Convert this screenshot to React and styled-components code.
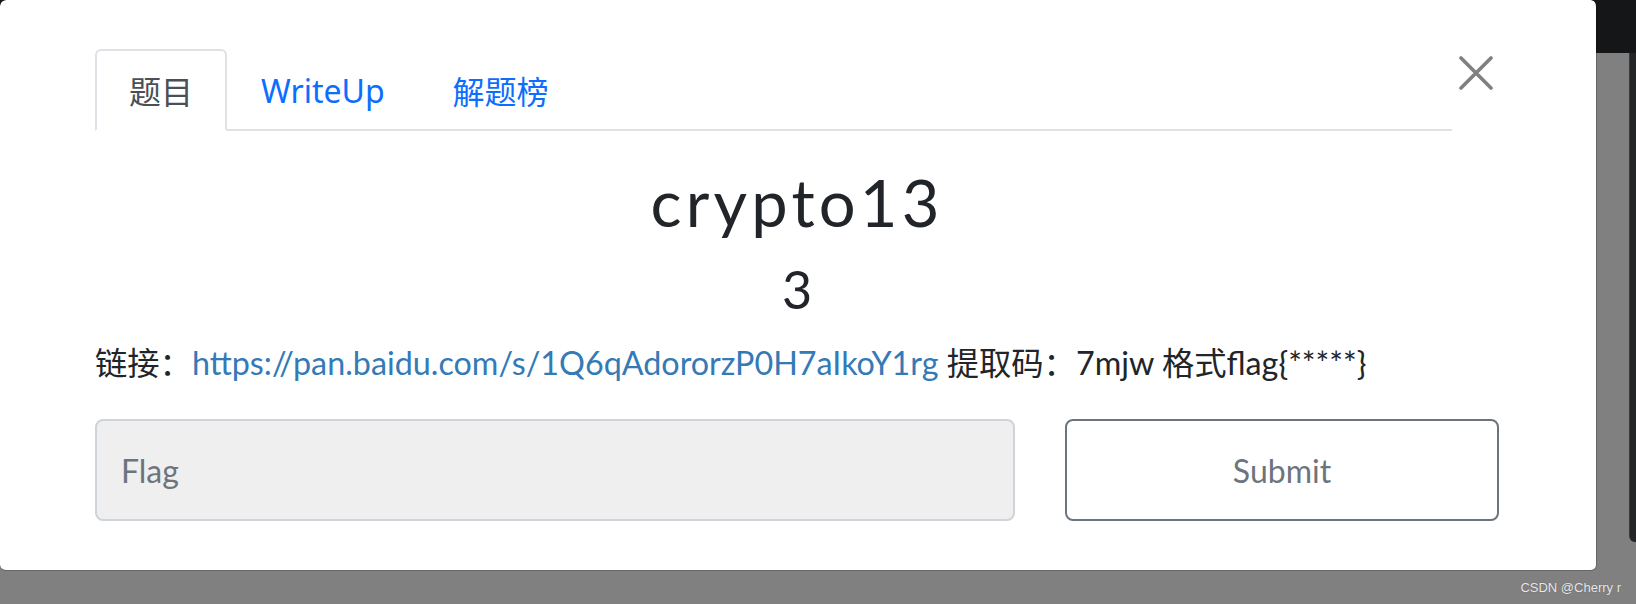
import React from "react";
import styled, { createGlobalStyle } from "styled-components";

const GlobalStyle = createGlobalStyle`
  html, body {
    margin: 0;
    padding: 0;
    overflow: hidden;
  }
  body {
    font-family: Lato, "Noto Sans CJK SC", sans-serif;
  }
`;

const Stage = styled.div`
  width: 1636px;
  height: 604px;
  display: flex;
  align-items: flex-start;
  background: linear-gradient(#151617 0 53px, #808080 53px);
  position: relative;
`;

const Modal = styled.div`
  box-sizing: border-box;
  width: 1597px;
  height: 571px;
  flex-shrink: 0;
  background: #fff;
  background-clip: padding-box;
  border-right: 1px solid rgba(0, 0, 0, 0.2);
  border-bottom: 1px solid rgba(0, 0, 0, 0.2);
  border-radius: 6px;
  padding: 49px 97px 0 95px;
  display: flex;
  flex-direction: column;
`;

const Side = styled.div`
  flex: 1;
  display: flex;
  justify-content: flex-end;
  padding-top: 53px;
`;

const ScrollStrip = styled.div`
  width: 6px;
  height: 489px;
  background: #232527;
  border-left: 1px solid #3a3b3c;
  border-bottom-left-radius: 6px;
`;

const Header = styled.div`
  display: flex;
  align-items: flex-start;
`;

const Tabs = styled.nav`
  flex: 1;
  display: flex;
  border-bottom: 2px solid #dee2e6;
`;

const Tab = styled.a`
  box-sizing: border-box;
  height: 82px;
  margin-bottom: -2px;
  padding: 0 32px;
  display: flex;
  align-items: center;
  font-family: "Noto Sans", "Noto Sans CJK SC", sans-serif;
  font-size: 32px;
  color: ${(p) => (p.active ? "#495057" : "#0d6efd")};
  background: ${(p) => (p.active ? "#fff" : "transparent")};
  border: 2px solid ${(p) => (p.active ? "#dee2e6" : "transparent")};
  border-bottom-color: ${(p) => (p.active ? "#fff" : "transparent")};
  border-radius: 6px 6px 0 0;
  text-decoration: none;
  cursor: pointer;
`;

const CloseButton = styled.button`
  width: 47px;
  height: 47px;
  padding: 0;
  border: none;
  background: transparent;
  display: flex;
  align-items: center;
  justify-content: center;
  cursor: pointer;
`;

const Title = styled.h1`
  margin: 32px 0 0;
  text-align: center;
  font-family: Lato, sans-serif;
  font-weight: 400;
  font-size: 65px;
  line-height: 78px;
  letter-spacing: 4.2px;
  color: #212529;
`;

const Score = styled.div`
  margin-top: 17px;
  text-align: center;
  font-family: Lato, sans-serif;
  font-size: 52px;
  line-height: 62px;
  color: #212529;
`;

const Desc = styled.p`
  margin: 24px 0 0;
  font-family: Lato, "Noto Sans CJK SC", sans-serif;
  font-size: 32.3px;
  line-height: 37px;
  color: #212529;
  white-space: nowrap;

  a {
    color: #337ab7;
    text-decoration: none;
  }
`;

const FormRow = styled.form`
  margin-top: 38px;
  display: flex;
  gap: 50px;
`;

const FlagInput = styled.input`
  box-sizing: border-box;
  flex: 1;
  height: 102px;
  padding: 0 24px;
  font-family: Lato, sans-serif;
  font-size: 32px;
  color: #495057;
  background: #efefef;
  border: 2px solid #ced4da;
  border-radius: 8px;
  outline: none;

  &::placeholder {
    color: #6c757d;
  }
`;

const SubmitButton = styled.button`
  box-sizing: border-box;
  width: 434px;
  height: 102px;
  font-family: Lato, sans-serif;
  font-size: 32px;
  color: #6c757d;
  background: #fff;
  border: 2px solid #6c757d;
  border-radius: 8px;
  cursor: pointer;
`;

const Watermark = styled.span`
  position: absolute;
  right: 15px;
  bottom: 9px;
  font-family: "Liberation Sans", Arial, sans-serif;
  font-size: 13px;
  color: #e8e8e8;
  text-shadow: 0 0 1px #555;
`;

const CloseIcon = () => (
  <svg width="34" height="34" viewBox="0 0 34 34">
    <path
      d="M2 2 L32 32 M32 2 L2 32"
      stroke="#808080"
      strokeWidth="3.6"
      strokeLinecap="round"
      fill="none"
    />
  </svg>
);

export default function App() {
  const tabs = ["题目", "WriteUp", "解题榜"];
  return (
    <>
      <GlobalStyle />
      <Stage>
        <Modal>
          <Header>
            <Tabs>
              {tabs.map((t, i) => (
                <Tab key={t} active={i === 0 ? 1 : 0}>
                  {t}
                </Tab>
              ))}
            </Tabs>
            <CloseButton aria-label="Close">
              <CloseIcon />
            </CloseButton>
          </Header>
          <Title>crypto13</Title>
          <Score>3</Score>
          <Desc>
            链接：<a href="#">https://pan.baidu.com/s/1Q6qAdororzP0H7aIkoY1rg</a> 提取码：7mjw 格式flag{"{*****}"}
          </Desc>
          <FormRow onSubmit={(e) => e.preventDefault()}>
            <FlagInput type="text" placeholder="Flag" />
            <SubmitButton type="submit">Submit</SubmitButton>
          </FormRow>
        </Modal>
        <Side>
          <ScrollStrip />
        </Side>
        <Watermark>CSDN @Cherry r</Watermark>
      </Stage>
    </>
  );
}
